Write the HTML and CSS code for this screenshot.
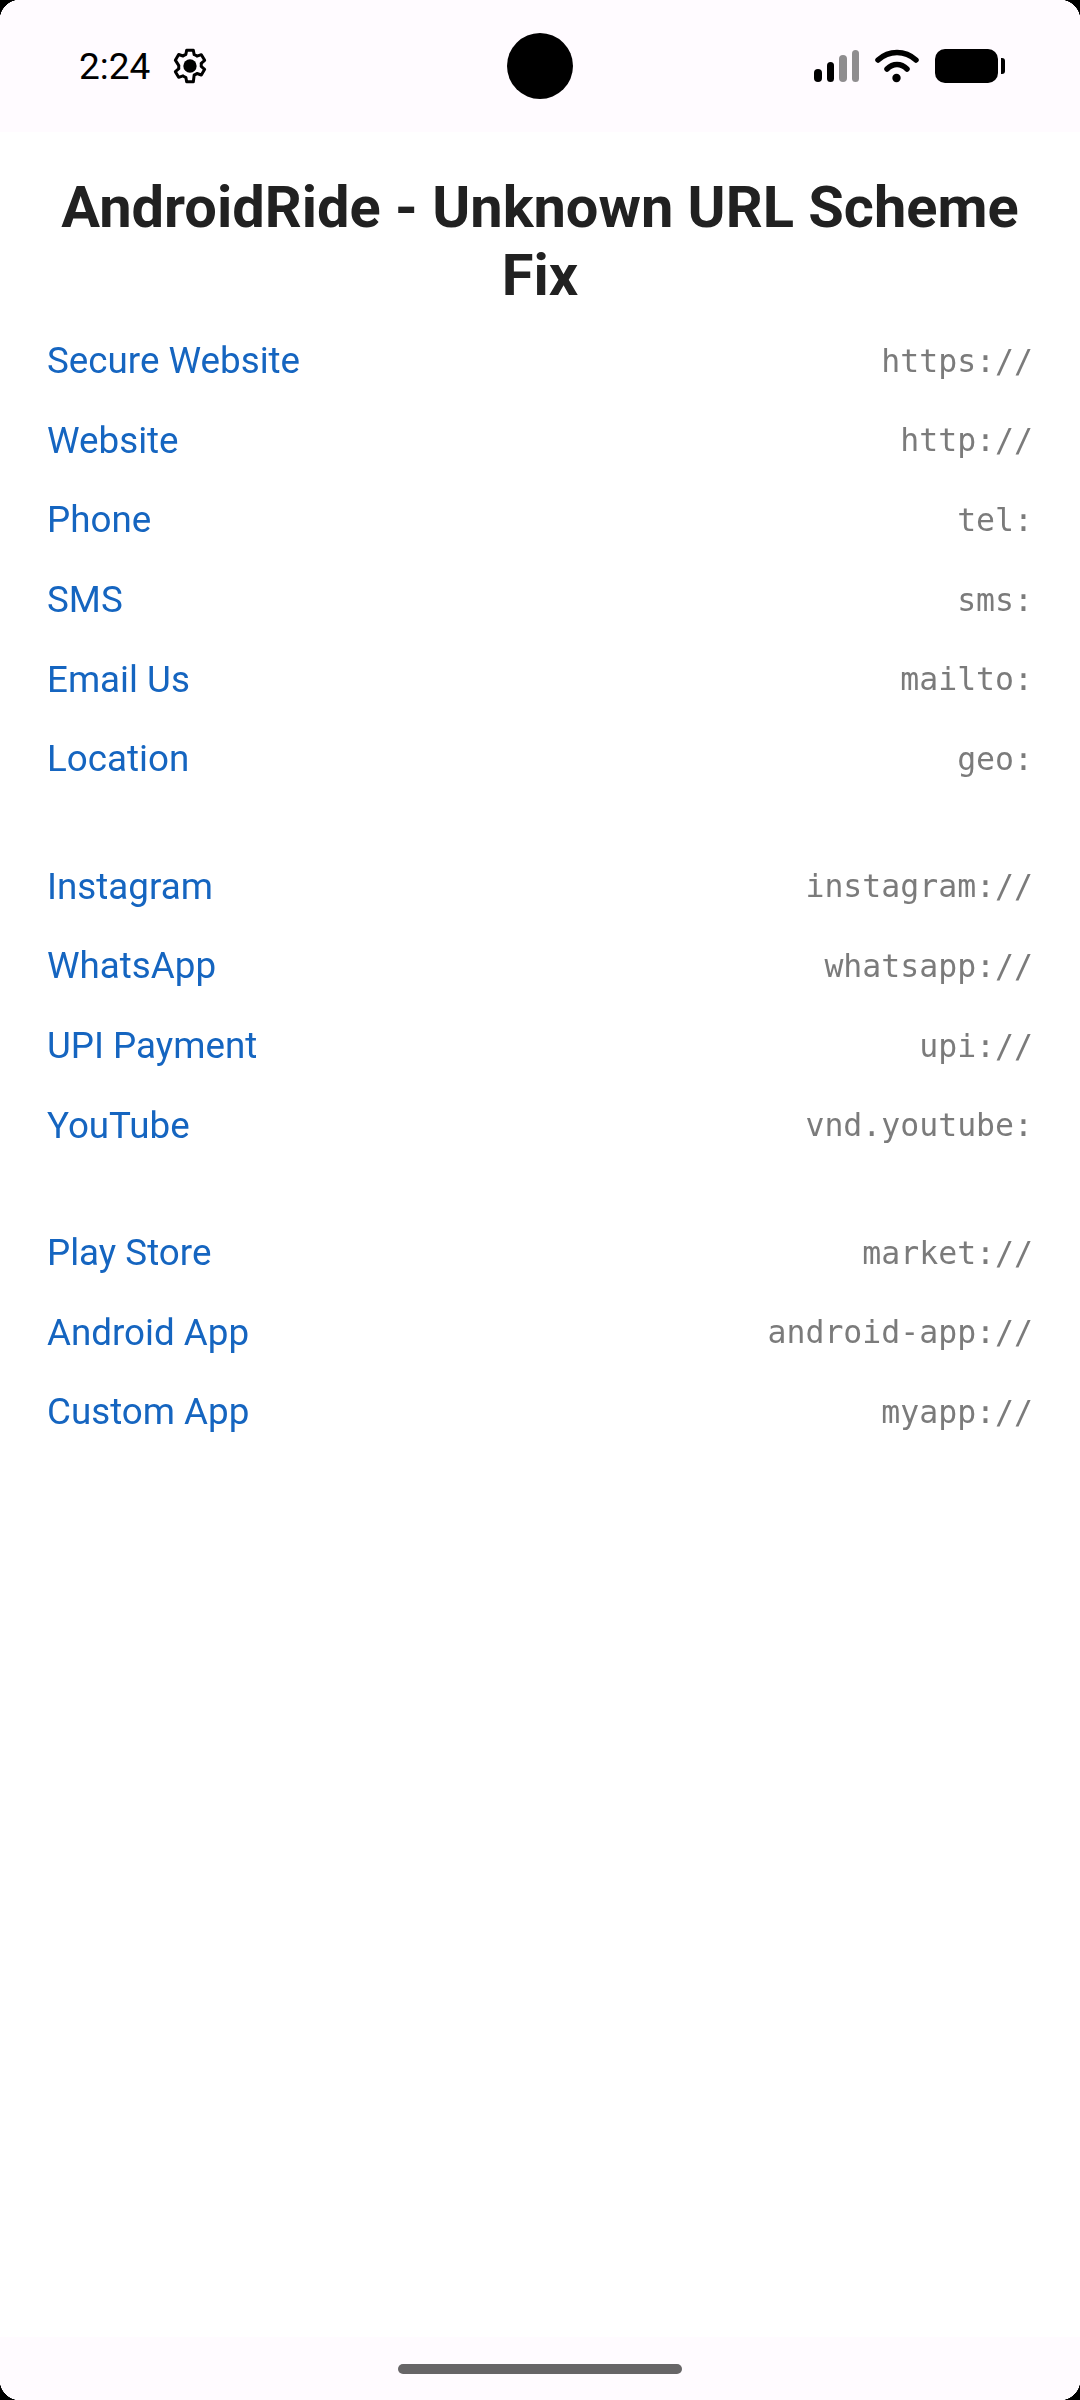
FILE: index.html
```html
<!DOCTYPE html>
<html lang="en">
<head>
<meta charset="utf-8">
<title>AndroidRide - Unknown URL Scheme Fix</title>
<meta name="viewport" content="width=device-width, initial-scale=1.0">
<link rel="stylesheet" href="styles.css">
</head>
<body>
<div class="screen">
<div class="status-bar">
<div class="status-left">
<span class="clock">2:24</span>
<svg class="gear" width="40" height="40" viewBox="0 0 24 24"><path fill="none" stroke="#000" stroke-width="1.8" stroke-linejoin="round" d="M10 2.500h4l.5 2.700c.6.2 1.200.5 1.700.9l2.600-.9 2 3.400-2.100 1.800c.1.6.1 1.200 0 1.800l2.100 1.800-2 3.400-2.600-.9c-.5.4-1.100.7-1.700.9L14 21.500h-4l-.5-2.700c-.6-.2-1.200-.5-1.700-.9l-2.600.9-2-3.400 2.100-1.800c-.1-.6-.1-1.200 0-1.800L3.200 8.500l2-3.400 2.600.9c.5-.4 1.100-.7 1.700-.9z"/><circle cx="12" cy="12" r="4" fill="#000"/></svg>
</div>
<div class="camera"></div>
<div class="status-right">
<div class="signal">
<span class="bar bar-1"></span>
<span class="bar bar-2"></span>
<span class="bar bar-3"></span>
<span class="bar bar-4"></span>
</div>
<svg class="wifi" width="44" height="34" viewBox="0 0 44 34"><path fill="none" stroke="#000" stroke-width="5.500" stroke-linecap="round" d="M3 11C14 1 30 1 41 11"/><path fill="none" stroke="#000" stroke-width="5.500" stroke-linecap="round" d="M12 20C18 14 26 14 32 20"/><circle cx="21.500" cy="29" r="4.200" fill="#000"/></svg>
<div class="battery"><div class="battery-body"></div><div class="battery-tip"></div></div>
</div>
</div>

<div class="content">
<h1 class="title">AndroidRide - Unknown URL Scheme Fix</h1>

<div class="group">
<div class="row"><a class="link" href="#">Secure Website</a><code class="scheme">https://</code></div>
<div class="row"><a class="link" href="#">Website</a><code class="scheme">http://</code></div>
<div class="row"><a class="link" href="#">Phone</a><code class="scheme">tel:</code></div>
<div class="row"><a class="link" href="#">SMS</a><code class="scheme">sms:</code></div>
<div class="row"><a class="link" href="#">Email Us</a><code class="scheme">mailto:</code></div>
<div class="row"><a class="link" href="#">Location</a><code class="scheme">geo:</code></div>
</div>

<div class="group">
<div class="row"><a class="link" href="#">Instagram</a><code class="scheme">instagram://</code></div>
<div class="row"><a class="link" href="#">WhatsApp</a><code class="scheme">whatsapp://</code></div>
<div class="row"><a class="link" href="#">UPI Payment</a><code class="scheme">upi://</code></div>
<div class="row"><a class="link" href="#">YouTube</a><code class="scheme">vnd.youtube:</code></div>
</div>

<div class="group">
<div class="row"><a class="link" href="#">Play Store</a><code class="scheme">market://</code></div>
<div class="row"><a class="link" href="#">Android App</a><code class="scheme">android-app://</code></div>
<div class="row"><a class="link" href="#">Custom App</a><code class="scheme">myapp://</code></div>
</div>
</div>

<div class="nav-bar"><div class="home-pill"></div></div>

<div class="corner corner-tl"></div>
<div class="corner corner-tr"></div>
<div class="corner corner-bl"></div>
<div class="corner corner-br"></div>
</div>
</body>
</html>
```

FILE: styles.css
```css
* {
margin: 0;
padding: 0;
box-sizing: border-box;
}

html, body {
width: 1080px;
height: 2400px;
overflow: hidden;
background-color: #fff;
}

body {
font-family: Roboto, sans-serif;
}

.screen {
position: relative;
display: flex;
flex-direction: column;
width: 1080px;
height: 2400px;
overflow: hidden;
}

.status-bar {
position: relative;
display: flex;
justify-content: space-between;
align-items: center;
height: 132px;
padding: 0 75px 0 79px;
background-color: #fffbff;
}

.status-left {
display: flex;
align-items: center;
gap: 20px;
}

.clock {
font-size: 37px;
color: #000;
}

.camera {
position: absolute;
top: 33px;
left: 507px;
width: 66px;
height: 66px;
border-radius: 50%;
background-color: #000;
}

.status-right {
display: flex;
align-items: center;
gap: 16px;
}

.signal {
display: flex;
align-items: flex-end;
gap: 5px;
height: 32px;
}

.bar {
width: 7.500px;
border-radius: 4px;
background-color: #000;
}

.bar-1 { height: 13px; }
.bar-2 { height: 20px; }
.bar-3 { height: 27px; background-color: #8f8d8f; }
.bar-4 { height: 32px; background-color: #8f8d8f; }

.battery {
display: flex;
align-items: center;
gap: 3px;
}

.battery-body {
width: 63px;
height: 34px;
border-radius: 10px;
background-color: #000;
}

.battery-tip {
width: 4px;
height: 16px;
border-radius: 0 3px 3px 0;
background-color: #000;
}

.content {
flex: 1;
padding: 41px 47px 0;
will-change: transform;
}

.title {
margin: 0 -16px 12px;
font-size: 57.750px;
line-height: 68px;
font-weight: 700;
text-align: center;
color: #212121;
}

.group {
display: flex;
flex-direction: column;
margin-bottom: 48px;
}

.row {
display: flex;
justify-content: space-between;
align-items: center;
height: 79.600px;
}

.link {
font-size: 36.750px;
color: #1565c0;
text-decoration: none;
}

.scheme {
font-family: "DejaVu Sans Mono", monospace;
font-size: 31.500px;
color: #7b7b7b;
}

.nav-bar {
display: flex;
justify-content: center;
height: 63px;
padding-top: 27px;
background-color: #fffbff;
}

.home-pill {
width: 284px;
height: 10px;
border-radius: 5px;
background-color: #676567;
}

.corner {
position: absolute;
width: 20px;
height: 20px;
background-color: #000;
}

.corner-tl { top: 0; left: 0; -webkit-mask: radial-gradient(circle at 100% 100%, transparent 20px, #000 20.500px); mask: radial-gradient(circle at 100% 100%, transparent 20px, #000 20.500px); }
.corner-tr { top: 0; right: 0; -webkit-mask: radial-gradient(circle at 0 100%, transparent 20px, #000 20.500px); mask: radial-gradient(circle at 0 100%, transparent 20px, #000 20.500px); }
.corner-bl { bottom: 0; left: 0; -webkit-mask: radial-gradient(circle at 100% 0, transparent 20px, #000 20.500px); mask: radial-gradient(circle at 100% 0, transparent 20px, #000 20.500px); }
.corner-br { bottom: 0; right: 0; -webkit-mask: radial-gradient(circle at 0 0, transparent 20px, #000 20.500px); mask: radial-gradient(circle at 0 0, transparent 20px, #000 20.500px); }
```
